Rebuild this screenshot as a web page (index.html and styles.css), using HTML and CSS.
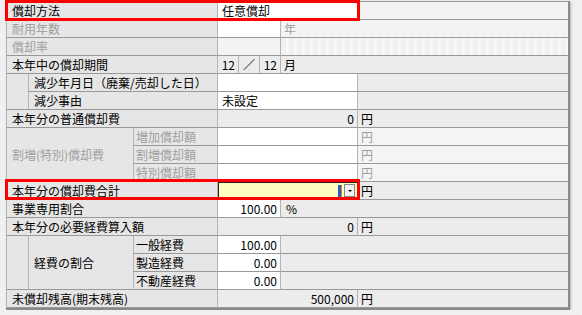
FILE: index.html
```html
<!DOCTYPE html>
<html lang="ja">
<head>
    <meta charset="UTF-8">
    <meta name="viewport" content="width=device-width, initial-scale=1.0">
    <title>償却費の計算</title>
    <link rel="stylesheet" href="styles.css">
</head>
<body>
    <div class="frame">
        <div class="sheet">
            <!-- 償却方法 -->
            <div class="c lbl span3">償却方法</div>
            <div class="c white span4">任意償却</div>
            <div class="c pale"></div>

            <div class="c lbl span3 dis">耐用年数</div>
            <div class="c white span3"></div>
            <div class="c unit dis pale span2">年</div>

            <div class="c lbl span3 dis">償却率</div>
            <div class="c pale span3"></div>
            <div class="c stripes span2"></div>

            <div class="c lbl span3">本年中の償却期間</div>
            <div class="c num">12</div>
            <div class="c mid">／</div>
            <div class="c num">12</div>
            <div class="c unit span2">月</div>

            <!-- 減少 -->
            <div class="c ind rows2"></div>
            <div class="c lbl span2">減少年月日（廃棄/売却した日）</div>
            <div class="c white span4"></div>
            <div class="c"></div>
            <div class="c lbl span2">減少事由</div>
            <div class="c white span4">未設定</div>
            <div class="c"></div>

            <div class="c lbl span3">本年分の普通償却費</div>
            <div class="c num span4">0</div>
            <div class="c unit">円</div>

            <!-- 割増(特別)償却費 -->
            <div class="c lbl group dis span2 rows3">割増(特別)償却費</div>
            <div class="c sub dis">増加償却額</div>
            <div class="c white span4"></div>
            <div class="c unit dis light">円</div>
            <div class="c sub dis">割増償却額</div>
            <div class="c white span4"></div>
            <div class="c unit dis light">円</div>
            <div class="c sub dis">特別償却額</div>
            <div class="c white span4"></div>
            <div class="c unit dis light">円</div>

            <div class="c lbl span3">本年分の償却費合計</div>
            <div class="c entry span4">
                <span class="sel"></span>
                <span class="pick"></span>
            </div>
            <div class="c unit">円</div>

            <div class="c lbl span3">事業専用割合</div>
            <div class="c num white span3">100.00</div>
            <div class="c unit pct span2">%</div>

            <div class="c lbl span3">本年分の必要経費算入額</div>
            <div class="c num span4">0</div>
            <div class="c unit">円</div>

            <!-- 経費の割合 -->
            <div class="c ind rows3"></div>
            <div class="c lbl group rows3">経費の割合</div>
            <div class="c sub">一般経費</div>
            <div class="c num white span3">100.00</div>
            <div class="c span2"></div>
            <div class="c sub">製造経費</div>
            <div class="c num white span3">0.00</div>
            <div class="c span2"></div>
            <div class="c sub">不動産経費</div>
            <div class="c num white span3">0.00</div>
            <div class="c span2"></div>

            <div class="c lbl span3">未償却残高(期末残高)</div>
            <div class="c num span4">500,000</div>
            <div class="c unit">円</div>
        </div>

        <div class="mark mark-method"></div>
        <div class="mark mark-total"></div>
    </div>
</body>
</html>
```

FILE: styles.css
```css
body {
    margin: 0;
    font-family: "Noto Sans CJK JP", sans-serif;
    font-size: 12px;
    color: #000;
    background: repeating-conic-gradient(#f5f5f5 0 25%, #ebebeb 0 50%) 0 0 / 2px 2px;
}
.frame {
    position: relative;
    width: 562px;
    margin: 1px 0 0 6px;
    border-top: 1px solid #9a9a9a;
    border-right: 2px solid #8a8a84;
    border-bottom: 2px solid #8a8a84;
    box-shadow: 1px 1px 2px rgba(0, 0, 0, 0.25);
}
.sheet {
    display: grid;
    grid-template-columns: 22px 105px 84px 21px 21px 21px 77px 1fr;
    grid-auto-rows: 18px;
    background-color: #ececec;
}
.c {
    box-sizing: border-box;
    border-left: 1px solid #b4b4b4;
    border-bottom: 1px solid #999;
    line-height: 17px;
    white-space: nowrap;
    overflow: hidden;
    background-color: #ececec;
}
.span2 { grid-column: span 2; }
.span3 { grid-column: span 3; }
.span4 { grid-column: span 4; }
.rows2 { grid-row: span 2; }
.rows3 { grid-row: span 3; }
.lbl {
    padding-left: 5px;
    background-color: #e6e6e6;
}
.ind {
    background-color: #e6e6e6;
}
.group {
    display: flex;
    align-items: center;
}
.sub {
    padding-left: 2px;
    background-color: #e6e6e6;
}
.dis {
    color: #a0a0a0;
}
.white {
    background-color: #fff;
    padding-left: 4px;
}
.num {
    text-align: right;
    padding: 0 3px 0 0;
}
.mid {
    text-align: center;
}
.unit {
    padding-left: 3px;
}
.pct {
    padding-left: 5px;
}
.pale {
    background-color: #f3f3f3;
}
.light {
    background-color: #f4f4f4;
}
.stripes {
    background: repeating-linear-gradient(90deg, #f1f1f1 0 5px, #f8f8f8 5px 8px);
}
.entry {
    display: flex;
    align-items: center;
    justify-content: flex-end;
    gap: 2px;
    padding-right: 2px;
    background-color: #ffffc0;
    box-shadow: inset 1px 1px 0 #222;
}
.sel {
    width: 3px;
    height: 12px;
    background-color: #1e5fc8;
    border-right: 1px solid #e08020;
}
.pick {
    position: relative;
    width: 11px;
    height: 13px;
    box-sizing: border-box;
    background-color: #f0f0f0;
    border: 1px solid #888;
}
.pick::after {
    content: "";
    position: absolute;
    left: 3px;
    top: 5px;
    border-left: 2px solid transparent;
    border-right: 2px solid transparent;
    border-top: 2px solid #000;
}
.mark {
    position: absolute;
    left: -1px;
    width: 355px;
    height: 21px;
    box-sizing: border-box;
    border: 3px solid #f00;
}
.mark-method {
    top: -2px;
}
.mark-total {
    top: 177px;
}
```
